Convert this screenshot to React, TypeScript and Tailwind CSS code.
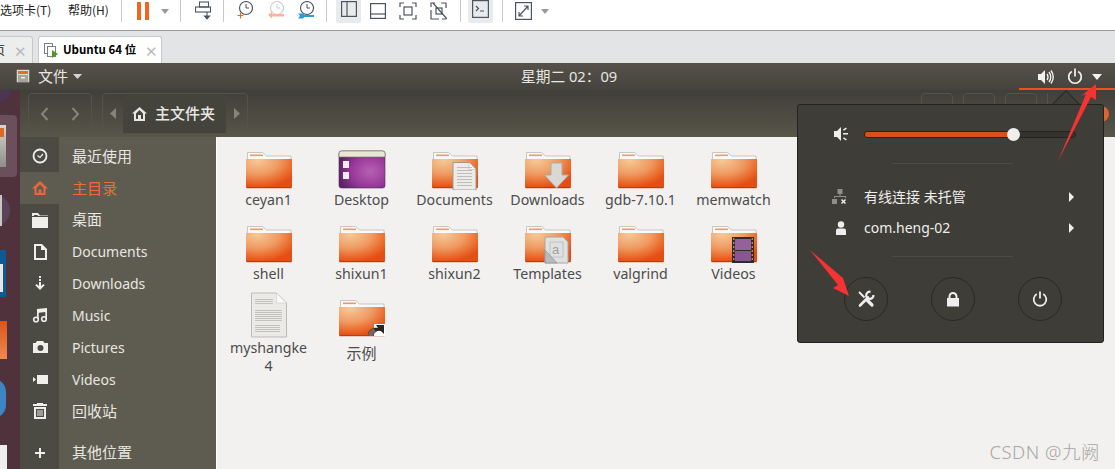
import React from "react";

const cjk = `"Noto Sans","Noto Sans CJK SC",sans-serif`;

function Folder({ badge }: { badge?: React.ReactNode }) {
  const id = React.useId();
  return (
    <svg width="48" height="40" viewBox="0 0 48 40" className="block">
      <defs>
        <radialGradient id={id} cx="0.25" cy="0.05" r="0.95">
          <stop offset="0" stopColor="#f6c996" />
          <stop offset="0.5" stopColor="#ef9a62" />
          <stop offset="0.8" stopColor="#ea6b2d" />
          <stop offset="1" stopColor="#e34e14" />
        </radialGradient>
      </defs>
      <path d="M2.500 2.500h15l4 3.500h24.500v6H2.500z" fill="#f9f9f7" stroke="#bdbab3" strokeWidth=".8" />
      <rect x="5" y="4.500" width="13" height="1.600" fill="#ef9a6a" />
      <path d="M1 9h46v27.500a1.500 1.500 0 0 1-1.500 1.500h-43A1.500 1.500 0 0 1 1 36.500z" fill={`url(#${id})`} />
      <rect x="1.500" y="37.200" width="45" height="1" fill="#ab3a0e" />
      {badge}
    </svg>
  );
}

const docBadge = (
  <g>
    <path d="M22 12.500h16l7 7V40H22z" fill="#ecebe8" stroke="#9a9a96" strokeWidth="1" />
    <path d="M38 12.500v7h7" fill="#fafafa" stroke="#b5b5b1" strokeWidth=".6" />
    {[17, 20, 23, 26, 29, 32, 35].map((y) => (
      <rect key={y} x="26" y={y} width="15" height=".7" fill="#aaaaa6" />
    ))}
  </g>
);
const downBadge = (
  <path d="M27 13h11v12h6.500L32.500 38 20.500 25H27z" fill="#d9d8d4" stroke="#adaca8" strokeWidth="1" />
);
const tplBadge = (
  <g>
    <path d="M21 13h18l5 5v21H21z" fill="#dfe0df" stroke="#a6a8aa" strokeWidth="1" />
    <rect x="26" y="18" width="13" height="15" fill="none" stroke="#b5b7b9" strokeWidth=".7" />
    <path d="M21 26l12 13H21z" fill="#b8babb" stroke="#8e9092" strokeWidth=".7" />
    <text x="28" y="30" fontSize="13" fill="#9ea0a2" fontFamily="Liberation Sans">a</text>
  </g>
);
const filmBadge = (
  <g>
    <rect x="22" y="13" width="22" height="26" fill="#2f2a2c" />
    <rect x="25" y="15" width="16" height="11" fill="#96609a" />
    <rect x="25" y="27" width="16" height="10" fill="#8a5590" />
    {[14, 18, 22, 26, 30, 34].map((y) => (
      <g key={y}>
        <rect x="23" y={y} width="1.400" height="2" fill="#d5813f" />
        <rect x="41.600" y={y} width="1.400" height="2" fill="#d5813f" />
      </g>
    ))}
  </g>
);
const linkBadge = (
  <g>
    <path d="M36 26h11v12H36z" fill="#fff" />
    <path d="M30 36c1-5 6-7 10-6l-2-3h8v9l-2.500-2.500C41 32 37 33 35 38h-4z" fill="#2a2625" />
    <path d="M30 36c1-3 3-5 6-5.500L38 34c-2 .5-3 2-3 4h-4z" fill="#7b625a" />
  </g>
);

function DesktopIcon() {
  return (
    <svg width="48" height="40" viewBox="0 0 48 40" className="block">
      <defs>
        <radialGradient id="dsk" cx="0.68" cy="0.55" r="0.7">
          <stop offset="0" stopColor="#b761b2" />
          <stop offset="0.6" stopColor="#97389a" />
          <stop offset="1" stopColor="#5d2468" />
        </radialGradient>
      </defs>
      <rect x="1" y="1" width="46" height="37" rx="2.500" fill="url(#dsk)" stroke="#4f2a55" strokeWidth=".6" />
      <path d="M1 3.500A2.500 2.500 0 0 1 3.500 1h41A2.500 2.500 0 0 1 47 3.500V7H1z" fill="#e9e6d3" stroke="#77755a" strokeWidth=".6" />
      <rect x="5" y="11" width="6" height="7" fill="#eee" />
      <rect x="5" y="22" width="6" height="7" fill="#eee" />
    </svg>
  );
}

function FileIcon() {
  return (
    <svg width="38" height="46" viewBox="0 0 38 46" className="block">
      <path d="M1.500 1h25l10 10v34h-35z" fill="#ebeae7" stroke="#bcbbb8" strokeWidth="1" />
      <path d="M26.500 1v10h10z" fill="#fafafa" stroke="#c8c7c4" strokeWidth=".6" />
      {[7, 9, 11].map((y) => <rect key={y} x="5" y={y} width="18" height=".7" fill="#b0b0ac" />)}
      {[18, 20, 22, 24, 26, 28].map((y) => <rect key={y} x="5" y={y} width="27" height=".7" fill="#b0b0ac" />)}
      {[33, 35, 37, 39].map((y) => <rect key={y} x="5" y={y} width="25" height=".7" fill="#b0b0ac" />)}
    </svg>
  );
}

function Item({ label, icon }: { label: string; icon: React.ReactNode }) {
  const wide = /[^\x00-\x7f]/.test(label);
  return (
    <div className="flex w-[93px] flex-col items-center">
      <div className="flex h-[46px] items-end justify-center">{icon}</div>
      <div className={`w-full px-[7px] text-center leading-[18px] text-[#4c4c4c] [overflow-wrap:anywhere] ${wide ? "mt-[6px] text-[15px]" : "mt-px text-[14.200px]"}`}>{label}</div>
    </div>
  );
}

function Gi({ children }: { children: React.ReactNode }) {
  return (
    <svg width={18} height={18} viewBox="0 0 18 18" fill="#f0efec" className="block">
      {children}
    </svg>
  );
}

const sideIcons: [string, React.ReactNode][] = [
  ["最近使用", <Gi><circle cx="9" cy="9" r="6.500" fill="none" stroke="#f0efec" strokeWidth="1.800" /><path d="M6.500 8.500L9 10.500l3-3.500" fill="none" stroke="#f0efec" strokeWidth="1.200" /></Gi>],
  ["主目录", <Gi><path fillRule="evenodd" d="M9 2L1 9.500h2.500V16h11V9.500H17zM5.500 9L9 5.500 12.500 9v5H10.500v-3.500h-3V14h-2z" fill="#e8683c" /></Gi>],
  ["桌面", <Gi><path d="M1 2h6l2 2.500h8V5H7.500L6 4H3v1H1zM1 6h16v11H1z" /></Gi>],
  ["Documents", <Gi><path fillRule="evenodd" d="M3 1h8l5 5v11H3zm2 2v12h9V7h-4V3z" /></Gi>],
  ["Downloads", <Gi><path d="M8 1h2v2H8zm0 3h2v2H8zm0 3h2v4l2.500-2 1.200 1.200L9 15 4.300 10.200 5.500 9 8 11z" /></Gi>],
  ["Music", <Gi><circle cx="5" cy="13.500" r="2.300" fill="none" stroke="#f0efec" strokeWidth="1.600" /><circle cx="13" cy="13" r="2.300" fill="none" stroke="#f0efec" strokeWidth="1.600" /><path d="M6 13V3l10-1v11h-1.700V6L7.700 6.700V13z" /></Gi>],
  ["Pictures", <Gi><path fillRule="evenodd" d="M6 3h6l1.500 2H17v10H2V5h2.500zM9.500 7a3 3 0 1 0 0 6 3 3 0 0 0 0-6z" /></Gi>],
  ["Videos", <Gi><path d="M6 5h11v9H6zM2 7l3 2.500L2 12z" /></Gi>],
  ["回收站", <Gi><path fillRule="evenodd" d="M6 1h6v1h4v2H2V2h4zM3 5h12v12H3zm2 2v8h8V7zm1.500 1h1v6h-1zm2 0h1v6h-1zm2 0h1v6h-1z" /></Gi>],
];

const isCjk = (s: string) => /[^\x00-\x7f]/.test(s);

function Sep({ className }: { className: string }) {
  return <div className={`h-[22px] w-px bg-[#c9c9c9] ${className}`} />;
}

function Caret({ className }: { className: string }) {
  return <svg width="8" height="5" viewBox="0 0 8 5" className={className}><path d="M0 0h8L4 5z" fill="#9a9a9a" /></svg>;
}

function Toolbar() {
  const s = "#4a5560";
  return (
    <div className="flex h-[30px] items-center bg-white pb-[8px] text-[12px] text-[#222]" style={{ fontFamily: `"Noto Sans CJK SC",sans-serif` }}>
      <span className="w-[68px] -translate-y-px whitespace-nowrap">选项卡(T)</span>
      <span className="w-[53px] -translate-y-px whitespace-nowrap">帮助(H)</span>
      <Sep className="" />
      <svg width="12" height="18" viewBox="0 0 12 18" className="ml-[15px]"><rect x="0" y="0" width="4" height="18" fill="#f4641f" /><rect x="8" y="0" width="4" height="18" fill="#f4641f" /></svg>
      <Caret className="ml-[12px]" />
      <Sep className="ml-[11px]" />
      <svg width="17" height="20" viewBox="0 0 17 20" fill="none" stroke={s} strokeWidth="1.100" className="ml-[14px]"><rect x="4.500" y="1" width="9" height="5" /><rect x=".5" y="6" width="15" height="5" /><path d="M12 11v5" /><path d="M9.500 15h5l-2.500 3z" fill={s} /></svg>
      <Sep className="ml-[11px]" />
      <svg width="16" height="20" viewBox="0 0 16 20" fill="none" className="ml-[13px]"><circle cx="9" cy="7" r="6.500" stroke={s} strokeWidth="1.100" /><path d="M9 3v4h3" stroke={s} /><path d="M.5 14.500h6M3.500 11.500v6" stroke="#f4641f" strokeWidth="1.200" /></svg>
      <svg width="16" height="20" viewBox="0 0 16 20" fill="none" className="ml-[15px]"><circle cx="9" cy="7" r="6.500" stroke="#c9cdd0" strokeWidth="1.100" /><path d="M9 3v4h3" stroke="#c9cdd0" /><path d="M0 14l4-3v2h12v2.500H4v2z" fill="#fdb395" /></svg>
      <svg width="16" height="20" viewBox="0 0 16 20" fill="none" className="ml-[14px]"><circle cx="9" cy="7" r="6.500" stroke={s} strokeWidth="1.100" /><path d="M9 3v4h3" stroke={s} /><path d="M0 12.500h5l1.500 1.500H16v2H6.500L5 17.500H0l2-2.500z" fill="#2f9ad8" /></svg>
      <Sep className="ml-[12px]" />
      <div className="ml-[9px] flex h-[27px] w-[25px] -translate-y-[2px] items-center justify-center rounded-[2px] bg-[#e9eaec]">
        <svg width="16" height="16" viewBox="0 0 16 16" fill="none" stroke={s} strokeWidth="1.200"><rect x=".6" y=".6" width="14.800" height="14.800" /><path d="M6 1v14" /></svg>
      </div>
      <svg width="16" height="16" viewBox="0 0 16 16" fill="none" stroke={s} strokeWidth="1.200" className="ml-[9px]"><rect x=".6" y=".6" width="14.800" height="14.800" /><path d="M1 11h14" /></svg>
      <svg width="18" height="18" viewBox="0 0 18 18" fill="none" stroke={s} strokeWidth="1.200" className="ml-[13px]"><path d="M1 5V1h4M13 1h4v4M17 13v4h-4M5 17H1v-4" /><rect x="5" y="5" width="8" height="8" /></svg>
      <svg width="17" height="18" viewBox="0 0 17 18" fill="none" stroke={s} strokeWidth="1.200" className="ml-[13px]"><path d="M1 5V1h4M11 1h5v5M16 17h-4M1 8v9h8" /><rect x="6" y="6" width="6" height="6" /><path d="M3 1l14 16" /></svg>
      <Sep className="ml-[13px]" />
      <div className="ml-[7px] flex h-[27px] w-[25px] -translate-y-[2px] items-center justify-center rounded-[2px] bg-[#e9eaec]">
        <svg width="17" height="18" viewBox="0 0 17 18" fill="none" stroke={s} strokeWidth="1.200"><rect x=".6" y=".6" width="15.800" height="16.800" /><path d="M4 6l2.500 2.500L4 11M8 11h4" /></svg>
      </div>
      <Sep className="ml-[9px]" />
      <svg width="17" height="18" viewBox="0 0 17 18" fill="none" stroke={s} strokeWidth="1.200" className="ml-[12px]"><rect x=".6" y=".6" width="15.800" height="16.800" /><path d="M4 14l9-10M9 4h4v4M4 10v4h4" /></svg>
      <Caret className="ml-[9px]" />
    </div>
  );
}

function Tabs() {
  return (
    <div className="flex h-[33px] items-end border-t border-t-[#9a9a9a] bg-[#e3e4e6]" style={{ fontFamily: `"Noto Sans CJK SC",sans-serif` }}>
      <div className="flex h-[27px] w-[33px] items-center justify-between rounded-tr-[3px] border-r border-t border-[#c8c9cb] bg-[#eceded] pr-[5px] text-[12px] text-[#222]">
        <span className="-ml-[7px]">页</span>
        <span className="text-[15px] leading-none text-[#b9babc]">✕</span>
      </div>
      <div className="ml-[5px] flex h-[27px] w-[124px] items-center rounded-t-[3px] border border-b-0 border-[#c8c9cb] bg-white pl-[5px] text-[11.500px] font-bold text-black">
        <svg width="15" height="15" viewBox="0 0 15 15" fill="none" className="mr-[4px] shrink-0"><rect x=".5" y=".5" width="8" height="10" stroke="#7a8086" /><rect x="3.500" y="3.500" width="8" height="10" fill="#fff" stroke="#7a8086" /><path d="M8 7l6 4-6 4z" fill="#4e9a1d" /></svg>
        <span className="w-[82px] whitespace-nowrap">Ubuntu 64 位</span>
        <span className="text-[15px] font-normal leading-none text-[#b9babc]">✕</span>
      </div>
    </div>
  );
}

function Popup() {
  return (
    <div className="absolute left-[797px] top-[104px] h-[239px] w-[307px] rounded-[3px] border border-[#23221f] bg-[#3e3d38]">
      <div className="absolute -top-[11px] left-[258px] h-[20px] w-[20px] rotate-45 border-l border-t border-[#23221f] bg-[#3e3d38] [clip-path:polygon(0_0,100%_0,0_100%)]" />
      <div className="flex h-[58px] items-center">
        <svg width="16" height="16" viewBox="0 0 16 16" fill="#f0efec" className="ml-[35px]"><path d="M1 5h3l4-4v14l-4-4H1z" /><path d="M10 7h5v1.500h-5zM10 3.500l3-2 .8 1.200-3 2zM10 12.500l3 2 .8-1.200-3-2z" /></svg>
        <div className="relative ml-[15px] h-[7px] w-[212px] rounded-full border border-[#24231f] bg-[#34332e]">
          <div className="h-full w-[148px] rounded-full bg-[#d9501c]" />
          <div className="absolute left-[142px] -top-[4px] h-[13px] w-[13px] rounded-full bg-[#eeeeec]" />
        </div>
      </div>
      <div className="ml-[94px] h-px w-[121px] bg-[#4c4b45]" />
      <div className="mt-[17px] flex h-[31px] items-center text-[14px] text-[#eeeeec]" style={{ fontFamily: cjk }}>
        <svg width="16" height="16" viewBox="0 0 16 16" fill="#8f8e8a" className="ml-[34px] shrink-0"><rect x="5.500" y="0" width="5" height="5" /><path d="M7.500 5h1v2H14v2h-1V8H3v1H2V7h5.500z" /><rect x="0" y="10" width="5" height="5" /><path d="M9 11l1-1 1.500 1.500L13 10l1 1-1.500 1.500L14 14l-1 1-1.500-1.500L10 15l-1-1 1.500-1.500z" fill="#f0efec" /></svg>
        <span className="ml-[16px] w-[205px] whitespace-nowrap">有线连接 未托管</span>
        <svg width="5" height="10" viewBox="0 0 5 10"><path d="M0 0l5 5-5 5z" fill="#eeeeec" /></svg>
      </div>
      <div className="flex h-[31px] items-center text-[14px] text-[#eeeeec]" style={{ fontFamily: cjk }}>
        <svg width="12" height="14" viewBox="0 0 12 14" fill="#eeeeec" className="ml-[37px] shrink-0"><circle cx="6" cy="3.500" r="3.200" /><path d="M1 14V9.500Q1 7.500 3 7.500h6q2 0 2 2V14z" /></svg>
        <span className="ml-[17px] w-[205px] whitespace-nowrap">com.heng-02</span>
        <svg width="5" height="10" viewBox="0 0 5 10"><path d="M0 0l5 5-5 5z" fill="#eeeeec" /></svg>
      </div>
      <div className="ml-[94px] mt-[13px] h-px w-[121px] bg-[#4c4b45]" />
      <div className="ml-[46px] mt-[20px] flex gap-[43px]">
        <div className="flex h-[44px] w-[44px] items-center justify-center rounded-full border border-[#2a2925]">
          <svg width="18" height="18" viewBox="0 0 18 18" fill="none" stroke="#eeeeec">
            <path d="M3 15.500L11 7.500" strokeWidth="2.600" strokeLinecap="round" />
            <path d="M13.500 1.800A3.600 3.600 0 1 0 16.400 5" strokeWidth="2.200" />
            <path d="M2 2l5.500 5.500" strokeWidth="2" />
            <path d="M10.500 10.500L15 15" strokeWidth="3.200" strokeLinecap="round" />
          </svg>
        </div>
        <div className="flex h-[44px] w-[44px] items-center justify-center rounded-full border border-[#2a2925]">
          <svg width="14" height="15" viewBox="0 0 14 15" fill="#eeeeec"><path fillRule="evenodd" d="M1 6h1.500V4.500a4.500 4.500 0 0 1 9 0V6H13v8.500H1zM4.500 6h5V4.500a2.500 2.500 0 0 0-5 0z" /></svg>
        </div>
        <div className="flex h-[44px] w-[44px] items-center justify-center rounded-full border border-[#2a2925]">
          <svg width="16" height="16" viewBox="0 0 16 16" fill="none" stroke="#eeeeec" strokeWidth="1.800"><path d="M4.800 3a6.300 6.300 0 1 0 6.400 0" /><path d="M8 .5v7" /></svg>
        </div>
      </div>
    </div>
  );
}

function Dock() {
  return (
    <div className="relative w-[20px] shrink-0 overflow-hidden bg-[#4f323c]">
      <div className="absolute -left-[12px] -top-[12px] h-[24px] w-[24px] rounded-full bg-[#4b3550]" />
      <div className="absolute -left-[8px] top-[25px] h-[62px] w-[25px] rounded-[4px] bg-[#6b4f5a]" />
      <div className="absolute left-0 top-[35px] h-[42px] w-[6px] bg-gradient-to-b from-[#d8d6d2] to-[#8e8d88]">
        <div className="mt-[3px] h-[9px] w-[4px] bg-[#dd6a22]" />
      </div>
      <div className="absolute -left-[20px] top-[105px] h-[31px] w-[30px] rounded-full bg-[#5b4256]" />
      <div className="absolute left-0 top-[105px] h-[31px] w-[2px] bg-[#c9c7c6]" />
      <div className="absolute left-0 top-[160px] h-[47px] w-[6px] bg-[#0e5a94]">
        <div className="mt-[14px] h-[28px] w-[3px] bg-[#e6e6e4]" />
      </div>
      <div className="absolute left-0 top-[231px] h-[38px] w-[7px] bg-gradient-to-b from-[#d9541c] to-[#f08a4a]" />
      <div className="absolute -left-[20px] top-[289px] h-[39px] w-[26px] rounded-full bg-[#3d86c6]" />
      <div className="absolute left-0 top-[355px] h-[24px] w-[7px] bg-[#eeeeec]" />
    </div>
  );
}

export default function App() {
  return (
    <div className="relative h-[469px] w-[1115px] overflow-hidden bg-white" style={{ fontFamily: cjk }}>
      <Toolbar />
      <Tabs />
      <div className="flex h-[27px] items-center bg-gradient-to-b from-[#56524a] to-[#45433d] text-[#e8e6e1]">
        <svg width="15" height="15" viewBox="0 0 15 15" className="ml-[16px]"><rect x=".5" y=".5" width="13" height="13" rx="1" fill="#dcdad4" stroke="#555" strokeWidth=".6" /><rect x="2" y="2" width="10" height="3" fill="#e96c28" /><rect x="2" y="6" width="10" height="7" fill="#a6a39a" /><rect x="5" y="8" width="4" height="1.500" fill="#eee" /></svg>
        <span className="ml-[7px] text-[15px]">文件</span>
        <svg width="9" height="5" viewBox="0 0 9 5" className="ml-[5px]"><path d="M0 0h9L4.500 5z" fill="#d8d6d1" /></svg>
        <span className="ml-[439px] whitespace-nowrap text-[14.700px]">星期二 02：09</span>
        <svg width="17" height="16" viewBox="0 0 17 16" fill="#f2f1ee" className="ml-auto"><path d="M1 5h3l4-4v14l-4-4H1z" /><path d="M10 5q2 3 0 6M12 3q3.500 5 0 10M14 1.500q4.500 6.500 0 13" fill="none" stroke="#f2f1ee" strokeWidth="1.400" /></svg>
        <svg width="16" height="17" viewBox="0 0 16 17" fill="none" stroke="#f2f1ee" strokeWidth="1.700" className="ml-[13px]"><path d="M4.800 3.500a6.300 6.300 0 1 0 6.400 0" /><path d="M8 .5v8" /></svg>
        <svg width="10" height="6" viewBox="0 0 10 6" className="ml-[9px] mr-[13px]"><path d="M0 0h10L5 6z" fill="#f2f1ee" /></svg>
      </div>
      <div className="flex h-[379px]">
        <Dock />
        <div className="flex min-w-0 flex-1 flex-col">
          <div className="flex h-[47px] shrink-0 bg-gradient-to-b from-[#403f39] to-[#585549]">
            <div className="ml-[8px] mt-[3px] flex h-[41px] w-[64px] items-center justify-around rounded-[4px] border border-[#55524a]">
              <svg width="9" height="14" viewBox="0 0 9 14" fill="none" stroke="#87847b" strokeWidth="2"><path d="M7.500 1L2 7l5.500 6" /></svg>
              <svg width="9" height="14" viewBox="0 0 9 14" fill="none" stroke="#87847b" strokeWidth="2"><path d="M1.500 1L7 7l-5.500 6" /></svg>
            </div>
            <div className="ml-[10px] mt-[3px] flex h-[41px] w-[146px] items-stretch rounded-[4px] border border-[#55524a]">
              <div className="flex w-[20px] items-center justify-center"><svg width="6" height="11" viewBox="0 0 6 11"><path d="M6 0v11L0 5.500z" fill="#87847b" /></svg></div>
              <div className="flex w-[103px] items-center bg-[#44433c] pl-[9px] text-[15px] text-[#e9e7e2]">
                <svg width="15" height="14" viewBox="0 0 15 14" fill="#e9e7e2" className="mr-[8px] shrink-0"><path fillRule="evenodd" d="M7.500 0L0 6.500h2V14h11V6.500h2zM4 6.500L7.500 3 11 6.500V12H9V8H6v4H4z" /></svg>
                <span className="whitespace-nowrap font-medium">主文件夹</span>
              </div>
              <div className="flex flex-1 items-center justify-center"><svg width="6" height="11" viewBox="0 0 6 11"><path d="M0 0v11l6-5.500z" fill="#87847b" /></svg></div>
            </div>
            <div className="ml-[673px] mt-[3px] h-[41px] w-[32px] rounded-[4px] border border-[#55524a]" />
            <div className="ml-[10px] mt-[3px] h-[41px] w-[32px] rounded-[4px] border border-[#55524a]" />
            <div className="ml-[10px] mt-[3px] h-[41px] w-[32px] rounded-[4px] border border-[#55524a]" />
            <div className="ml-[10px] mt-[3px] h-[41px] w-px bg-[#55524a]" />
            <div className="ml-auto mr-[6px] h-[16px] w-[16px] self-center rounded-full bg-[#e0622c]" />
          </div>
          <div className="flex min-h-0 flex-1">
            <div className="flex w-[196px] shrink-0 flex-col bg-[#5e5c51]">
              <div className="h-[3px] w-[39px] bg-[#4c4b43]" />
              {sideIcons.map(([label, icon]) => {
                const active = label === "主目录";
                return (
                  <div key={label} className="flex h-[31.900px] items-center">
                    <div className={`flex h-full w-[39px] items-center justify-center ${active ? "bg-[#5e5c51]" : "bg-[#4c4b43]"}`}>{icon}</div>
                    <span className={`ml-[13px] ${isCjk(label) ? "text-[15px]" : "text-[14px]"} ${active ? "text-[#ee6c3a]" : "text-[#e8e6e0]"}`}>{label}</span>
                  </div>
                );
              })}
              <div className="h-[10px] w-[39px] bg-[#4c4b43]" />
              <div className="flex h-[31px] items-center">
                <div className="flex h-full w-[39px] items-center justify-center bg-[#4c4b43]"><Gi><path d="M8 4h2v4h4v2h-4v4H8v-4H4V8h4z" /></Gi></div>
                <span className="ml-[13px] text-[15px] text-[#e8e6e0]">其他位置</span>
              </div>
              <div className="w-[39px] flex-1 bg-[#4c4b43]" />
            </div>
            <div className="ml-px flex-1 bg-[#f2f1f0] pl-[5px] pt-[7px]">
              <div className="grid grid-cols-[repeat(6,93px)] gap-y-[9px]">
                <Item label="ceyan1" icon={<Folder />} />
                <Item label="Desktop" icon={<DesktopIcon />} />
                <Item label="Documents" icon={<Folder badge={docBadge} />} />
                <Item label="Downloads" icon={<Folder badge={downBadge} />} />
                <Item label="gdb-7.10.1" icon={<Folder />} />
                <Item label="memwatch" icon={<Folder />} />
                <Item label="shell" icon={<Folder />} />
                <Item label="shixun1" icon={<Folder />} />
                <Item label="shixun2" icon={<Folder />} />
                <Item label="Templates" icon={<Folder badge={tplBadge} />} />
                <Item label="valgrind" icon={<Folder />} />
                <Item label="Videos" icon={<Folder badge={filmBadge} />} />
                <Item label="myshangke4" icon={<FileIcon />} />
                <Item label="示例" icon={<Folder badge={linkBadge} />} />
              </div>
            </div>
          </div>
        </div>
      </div>
      <div className="absolute left-[1019px] top-[88px] h-[2px] w-[96px] bg-[#e9541e]" />
      <Popup />
      <svg width="1115" height="469" viewBox="0 0 1115 469" className="pointer-events-none absolute left-0 top-0">
        <path d="M1058 161L1086 94 1081 96 1096 84 1096 100 1091 97z" fill="#f63232" />
        <path d="M810 250L843 278 849 296 833 288 838 285z" fill="#f63232" />
      </svg>
      <div className="absolute bottom-[7px] right-[15px] text-[18.500px] font-light leading-[20px] tracking-[0.500px] text-[#a8a6a4]">CSDN @九阙</div>
    </div>
  );
}
